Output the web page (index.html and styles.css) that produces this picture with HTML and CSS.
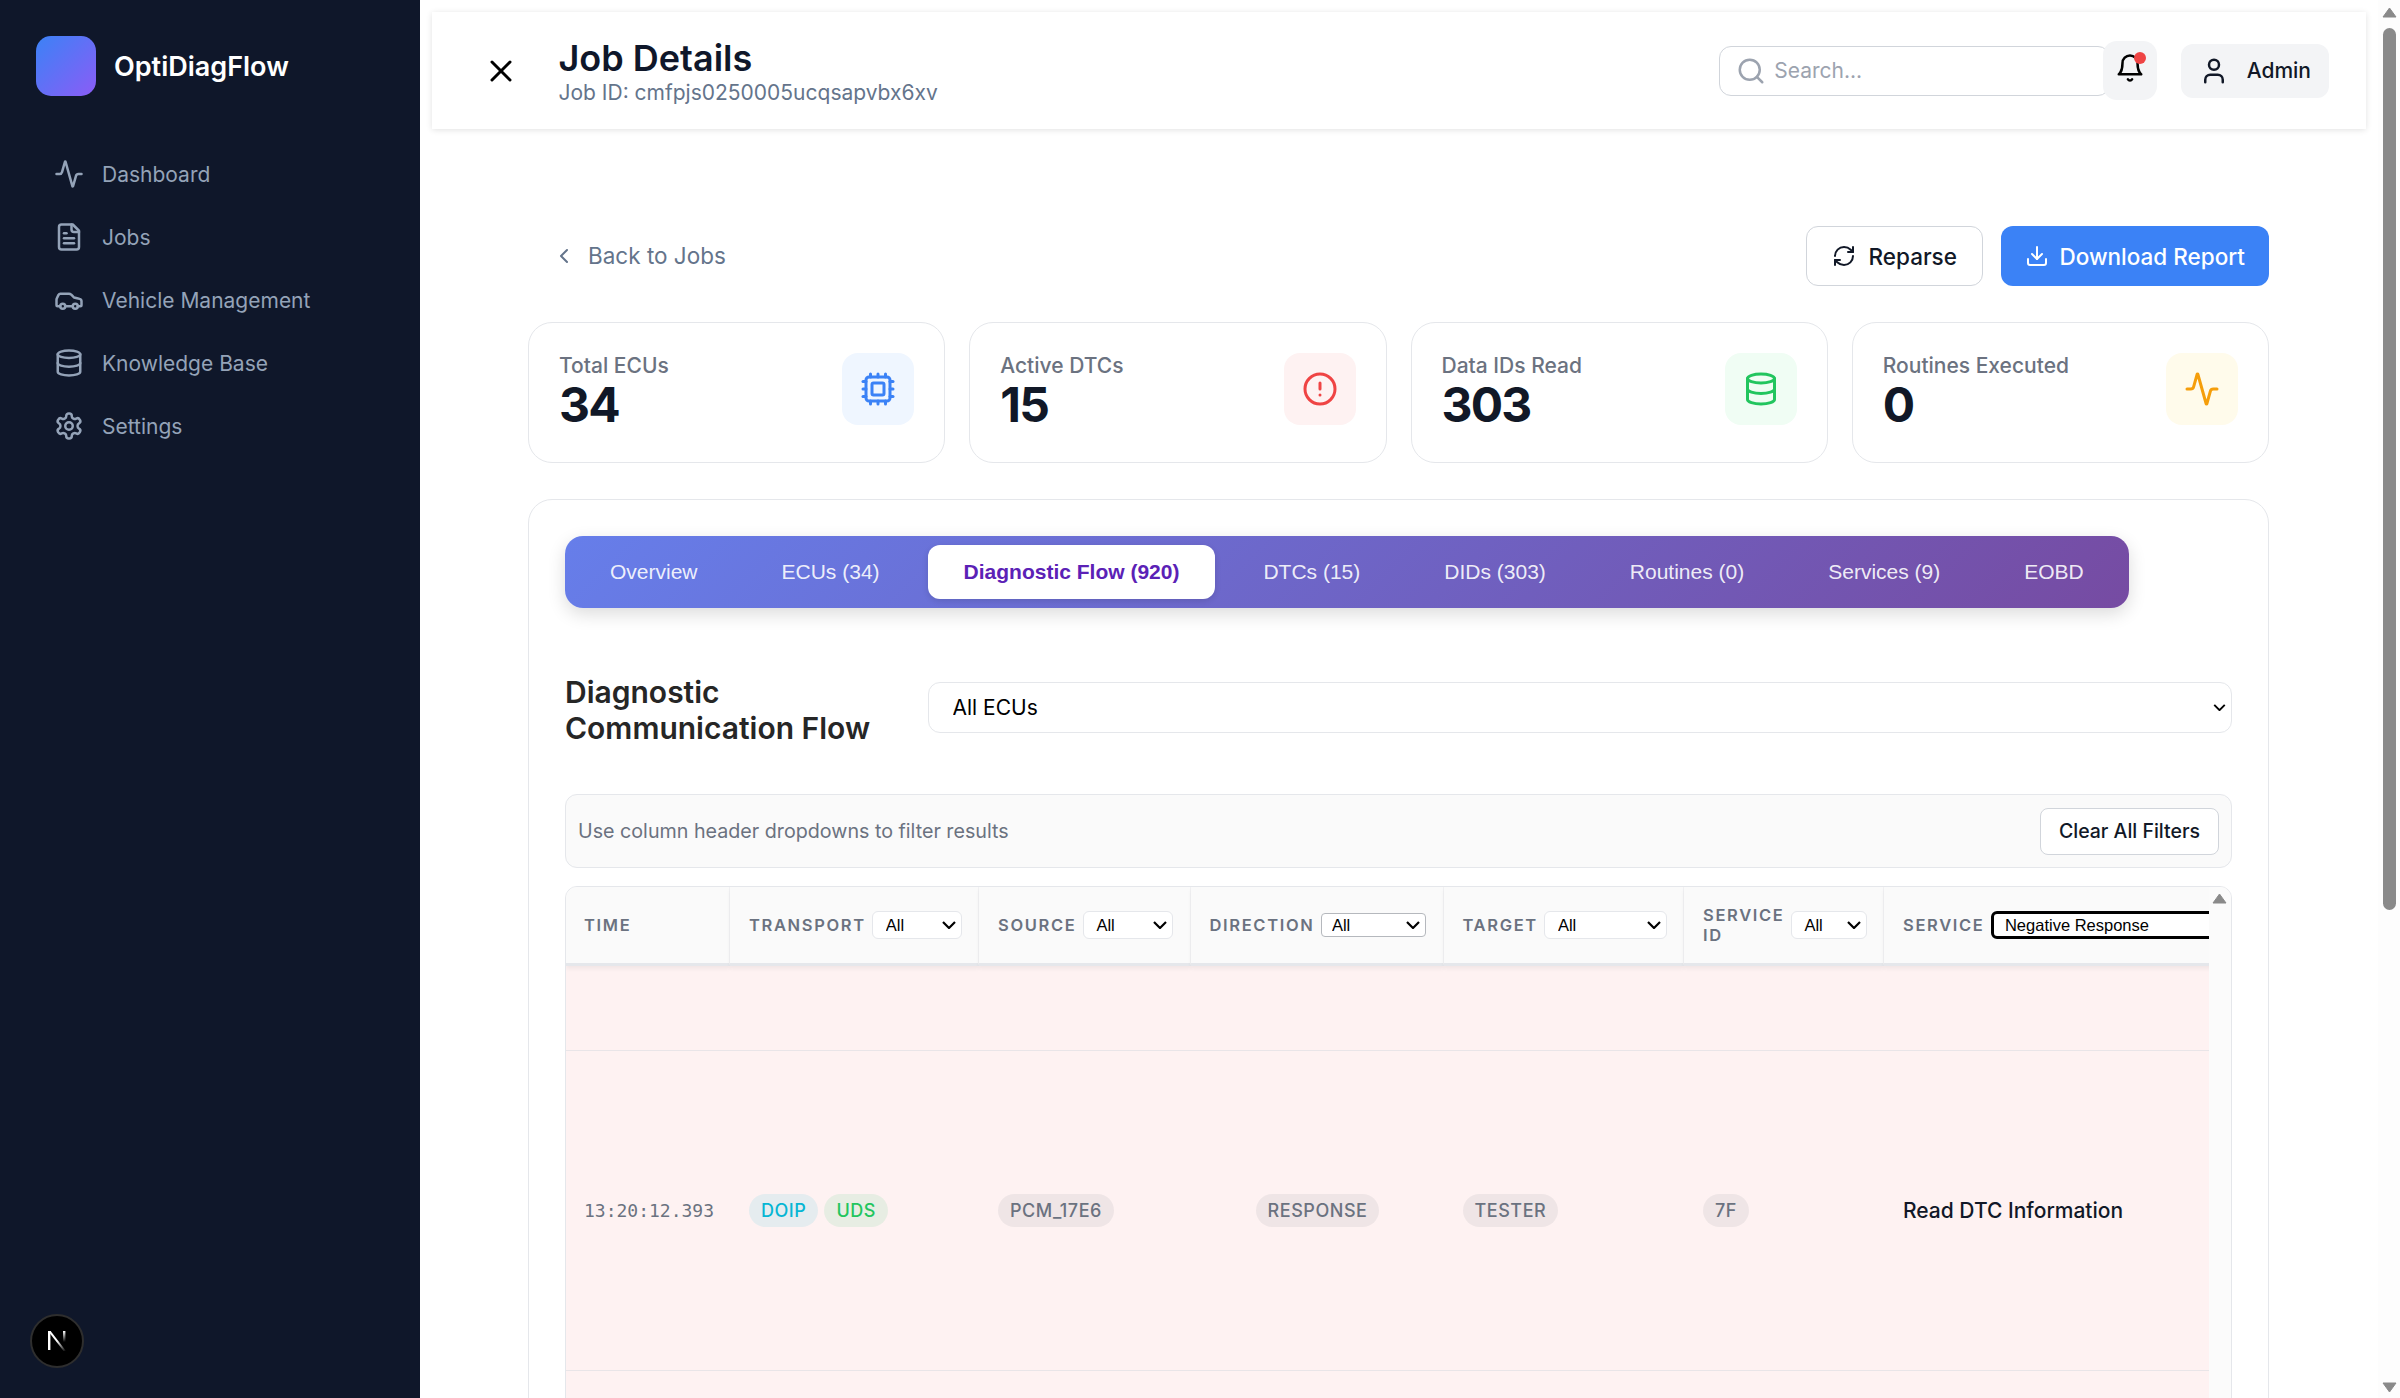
FILE: index.html
```html
<!DOCTYPE html>
<html lang="en">
<head>
<meta charset="utf-8">
<title>OptiDiagFlow - Job Details</title>
<link rel="stylesheet" href="styles.css">
</head>
<body>
<div class="app">
  <aside class="sidebar">
    <div class="brand"><div class="brand-logo"></div><span class="brand-name">OptiDiagFlow</span></div>
    <nav class="nav">
      <a class="nav-item"><svg class="ic30" viewBox="0 0 24 24"><path d="M22 12h-2.48a2 2 0 0 0-1.93 1.46l-2.35 8.36a.25.25 0 0 1-.48 0L9.24 2.18a.25.25 0 0 0-.48 0l-2.35 8.36A2 2 0 0 1 4.49 12H2"/></svg>Dashboard</a>
      <a class="nav-item"><svg class="ic30" viewBox="0 0 24 24"><path d="M15 2H6a2 2 0 0 0-2 2v16a2 2 0 0 0 2 2h12a2 2 0 0 0 2-2V7Z"/><path d="M14 2v4a2 2 0 0 0 2 2h4"/><path d="M10 9H8"/><path d="M16 13H8"/><path d="M16 17H8"/></svg>Jobs</a>
      <a class="nav-item"><svg class="ic30" viewBox="0 0 24 24"><path d="M19 17h2c.6 0 1-.4 1-1v-3c0-.9-.7-1.7-1.5-1.9C18.7 10.6 16 10 16 10s-1.3-1.4-2.2-2.3c-.5-.4-1.1-.7-1.8-.7H5c-.6 0-1.1.4-1.4.9l-1.4 2.9A3.7 3.7 0 0 0 2 12v4c0 .6.4 1 1 1h2"/><circle cx="7" cy="17" r="2"/><path d="M9 17h6"/><circle cx="17" cy="17" r="2"/></svg>Vehicle Management</a>
      <a class="nav-item"><svg class="ic30" viewBox="0 0 24 24"><ellipse cx="12" cy="5" rx="9" ry="3"/><path d="M3 5V19A9 3 0 0 0 21 19V5"/><path d="M3 12A9 3 0 0 0 21 12"/></svg>Knowledge Base</a>
      <a class="nav-item"><svg class="ic30" viewBox="0 0 24 24"><path d="M12.22 2h-.44a2 2 0 0 0-2 2v.18a2 2 0 0 1-1 1.73l-.43.25a2 2 0 0 1-2 0l-.15-.08a2 2 0 0 0-2.73.73l-.22.38a2 2 0 0 0 .73 2.73l.15.1a2 2 0 0 1 1 1.72v.51a2 2 0 0 1-1 1.74l-.15.09a2 2 0 0 0-.73 2.73l.22.38a2 2 0 0 0 2.73.73l.15-.08a2 2 0 0 1 2 0l.43.25a2 2 0 0 1 1 1.73V20a2 2 0 0 0 2 2h.44a2 2 0 0 0 2-2v-.18a2 2 0 0 1 1-1.73l.43-.25a2 2 0 0 1 2 0l.15.08a2 2 0 0 0 2.73-.73l.22-.39a2 2 0 0 0-.73-2.73l-.15-.08a2 2 0 0 1-1-1.74v-.5a2 2 0 0 1 1-1.74l.15-.09a2 2 0 0 0 .73-2.73l-.22-.38a2 2 0 0 0-2.73-.73l-.15.08a2 2 0 0 1-2 0l-.43-.25a2 2 0 0 1-1-1.73V4a2 2 0 0 0-2-2z"/><circle cx="12" cy="12" r="3"/></svg>Settings</a>
    </nav>
    <svg class="next-badge" viewBox="0 0 54 54">
      <defs>
        <linearGradient id="nd" x1="0" y1="0" x2="1" y2="1"><stop offset="0.5" stop-color="#fff"/><stop offset="1" stop-color="#fff" stop-opacity="0"/></linearGradient>
        <linearGradient id="nr" x1="0" y1="0" x2="0" y2="1"><stop offset="0" stop-color="#fff"/><stop offset="1" stop-color="#fff" stop-opacity="0"/></linearGradient>
      </defs>
      <circle cx="27" cy="27" r="26" fill="#000" stroke="#2e2e2e" stroke-width="2"/>
      <rect x="18" y="17" width="2.4" height="19" fill="#fff"/>
      <polygon points="18,17 20.6,17 36,37 33.6,37" fill="url(#nd)"/>
      <rect x="33" y="17" width="2.4" height="11" fill="url(#nr)"/>
    </svg>
  </aside>

  <main class="main">
    <header class="topbar">
      <svg class="ic36 close" viewBox="0 0 24 24"><path d="M18 6 6 18"/><path d="m6 6 12 12"/></svg>
      <div class="title-block">
        <h1 class="page-title">Job Details</h1>
        <div class="page-sub">Job ID: cmfpjs0250005ucqsapvbx6xv</div>
      </div>
      <div class="top-actions">
        <label class="search"><svg class="ic30" viewBox="0 0 24 24"><circle cx="11" cy="11" r="8"/><path d="m21 21-4.3-4.3"/></svg><input class="search-input" type="text" placeholder="Search..."></label>
        <button class="bell"><svg class="ic30" viewBox="0 0 24 24"><path d="M6 8a6 6 0 0 1 12 0c0 7 3 9 3 9H3s3-2 3-9"/><path d="M10.3 21a1.94 1.94 0 0 0 3.4 0"/></svg><span class="bell-dot"></span></button>
        <button class="admin"><svg class="ic30" viewBox="0 0 24 24"><path d="M19 21v-2a4 4 0 0 0-4-4H9a4 4 0 0 0-4 4v2"/><circle cx="12" cy="7" r="4"/></svg>Admin</button>
      </div>
    </header>

    <div class="content">
      <div class="action-row">
        <a class="back"><svg class="ic24" viewBox="0 0 24 24"><path d="m15 18-6-6 6-6"/></svg>Back to Jobs</a>
        <div class="action-btns">
          <button class="btn btn-outline"><svg class="ic24" viewBox="0 0 24 24"><path d="M3 12a9 9 0 0 1 9-9 9.75 9.75 0 0 1 6.74 2.74L21 8"/><path d="M21 3v5h-5"/><path d="M21 12a9 9 0 0 1-9 9 9.75 9.75 0 0 1-6.74-2.74L3 16"/><path d="M8 16H3v5"/></svg>Reparse</button>
          <button class="btn btn-primary"><svg class="ic24" viewBox="0 0 24 24"><path d="M21 15v4a2 2 0 0 1-2 2H5a2 2 0 0 1-2-2v-4"/><polyline points="7 10 12 15 17 10"/><line x1="12" x2="12" y1="15" y2="3"/></svg>Download Report</button>
        </div>
      </div>

      <section class="stats">
        <div class="stat"><div class="stat-text"><div class="stat-label">Total ECUs</div><div class="stat-value">34</div></div><div class="stat-icon tint-blue"><svg class="ic36" viewBox="0 0 24 24"><path d="M12 20v2"/><path d="M12 2v2"/><path d="M17 20v2"/><path d="M17 2v2"/><path d="M2 12h2"/><path d="M2 17h2"/><path d="M2 7h2"/><path d="M20 12h2"/><path d="M20 17h2"/><path d="M20 7h2"/><path d="M7 20v2"/><path d="M7 2v2"/><rect x="4" y="4" width="16" height="16" rx="2"/><rect x="8" y="8" width="8" height="8" rx="1"/></svg></div></div>
        <div class="stat"><div class="stat-text"><div class="stat-label">Active DTCs</div><div class="stat-value">15</div></div><div class="stat-icon tint-red"><svg class="ic36" viewBox="0 0 24 24"><circle cx="12" cy="12" r="10"/><line x1="12" x2="12" y1="8" y2="12"/><line x1="12" x2="12.01" y1="16" y2="16"/></svg></div></div>
        <div class="stat"><div class="stat-text"><div class="stat-label">Data IDs Read</div><div class="stat-value">303</div></div><div class="stat-icon tint-green"><svg class="ic36" viewBox="0 0 24 24"><ellipse cx="12" cy="5" rx="9" ry="3"/><path d="M3 5V19A9 3 0 0 0 21 19V5"/><path d="M3 12A9 3 0 0 0 21 12"/></svg></div></div>
        <div class="stat"><div class="stat-text"><div class="stat-label">Routines Executed</div><div class="stat-value">0</div></div><div class="stat-icon tint-amber"><svg class="ic36" viewBox="0 0 24 24"><path d="M22 12h-2.48a2 2 0 0 0-1.93 1.46l-2.35 8.36a.25.25 0 0 1-.48 0L9.24 2.18a.25.25 0 0 0-.48 0l-2.35 8.36A2 2 0 0 1 4.49 12H2"/></svg></div></div>
      </section>

      <section class="panel">
        <div class="tabs">
          <span class="tab">Overview</span>
          <span class="tab">ECUs (34)</span>
          <span class="tab tab-active">Diagnostic Flow (920)</span>
          <span class="tab">DTCs (15)</span>
          <span class="tab">DIDs (303)</span>
          <span class="tab">Routines (0)</span>
          <span class="tab">Services (9)</span>
          <span class="tab">EOBD</span>
        </div>

        <div class="flow-head">
          <h2 class="flow-title">Diagnostic Communication Flow</h2>
          <select class="ecu-select"><option>All ECUs</option></select>
        </div>

        <div class="filter-bar">
          <span class="filter-hint">Use column header dropdowns to filter results</span>
          <button class="clear-btn">Clear All Filters</button>
        </div>

        <div class="table-wrap">
          <div class="table-scroll">
            <table class="flow-table">
              <colgroup><col class="c-time"><col class="c-transport"><col class="c-source"><col class="c-direction"><col class="c-target"><col class="c-sid"><col class="c-service"></colgroup>
              <thead>
                <tr>
                  <th><div class="thc">Time</div></th>
                  <th><div class="thc"><span>Transport</span><select class="fsel"><option>All</option></select></div></th>
                  <th><div class="thc"><span>Source</span><select class="fsel"><option>All</option></select></div></th>
                  <th><div class="thc"><span>Direction</span><select class="fsel fsel-plain"><option>All</option></select></div></th>
                  <th><div class="thc"><span>Target</span><select class="fsel"><option>All</option></select></div></th>
                  <th><div class="thc"><span class="narrow">Service ID</span><select class="fsel"><option>All</option></select></div></th>
                  <th><div class="thc"><span>Service</span><select class="fsel fsel-focus"><option>Negative Response</option></select></div></th>
                </tr>
              </thead>
              <tbody>
                <tr class="row-a"><td></td><td></td><td></td><td></td><td></td><td></td><td></td></tr>
                <tr class="row-b">
                  <td class="time">13:20:12.393</td>
                  <td><span class="badge b-cyan">DOIP</span><span class="badge b-green">UDS</span></td>
                  <td><span class="badge b-gray">PCM_17E6</span></td>
                  <td class="center"><span class="badge b-gray">RESPONSE</span></td>
                  <td><span class="badge b-gray">TESTER</span></td>
                  <td><span class="badge b-gray">7F</span></td>
                  <td class="svc">Read DTC Information</td>
                </tr>
                <tr class="row-c"><td></td><td></td><td></td><td></td><td></td><td></td><td></td></tr>
              </tbody>
            </table>
          </div>
          <div class="table-gutter"><svg class="arrow" viewBox="0 0 15 11"><path d="M7.5 1 14 10H1z"/></svg></div>
        </div>
      </section>
    </div>
  </main>

  <div class="page-scrollbar">
    <svg class="arrow" viewBox="0 0 15 11"><path d="M7.5 1 14 10H1z"/></svg>
    <div class="thumb"></div>
    <svg class="arrow arrow-down" viewBox="0 0 15 11"><path d="M7.5 10 14 1H1z"/></svg>
  </div>
</div>
</body>
</html>
```
FILE: styles.css
```css
* { box-sizing: border-box; }
html, body { margin: 0; height: 100%; overflow: hidden; background: #fff; }
body { font-family: Inter, "Liberation Sans", sans-serif; font-size: 21px; color: #111827; }
h1, h2 { margin: 0; }
button { font-family: inherit; cursor: pointer; }
svg { flex: none; display: block; }

.ic24, .ic30, .ic36 { fill: none; stroke: currentColor; stroke-width: 2; stroke-linecap: round; stroke-linejoin: round; }
.ic24 { width: 24px; height: 24px; }
.ic30 { width: 30px; height: 30px; }
.ic36 { width: 36px; height: 36px; }

.app { display: flex; height: 100vh; overflow: hidden; }

/* sidebar */
.sidebar { position: relative; flex: 0 0 420px; background: #0f172a; padding: 36px 36px 0; }
.brand { display: flex; align-items: center; gap: 18px; height: 60px; }
.brand-logo { width: 60px; height: 60px; border-radius: 15px; background: linear-gradient(135deg, #3b82f6, #8b5cf6); }
.brand-name { font-size: 27px; font-weight: 600; color: #fff; }
.nav { display: flex; flex-direction: column; gap: 6px; margin-top: 49.5px; }
.nav-item { display: flex; align-items: center; gap: 18px; height: 57px; padding: 0 18px; color: #94a3b8; font-size: 21px; }
.next-badge { position: absolute; left: 30px; bottom: 30px; width: 54px; height: 54px; }

/* main */
.main { flex: 1; min-width: 0; }
.topbar { display: flex; align-items: center; height: 117px; margin: 12px 12px 0; padding: 0 37px 0 51px; background: #fff; box-shadow: 0 1px 6px rgba(0,0,0,.12); }
.close { color: #000; margin-top: 1px; }
.title-block { margin: 5px 0 0 39.5px; }
.page-title { font-size: 36px; line-height: 40px; font-weight: 600; color: #0f172a; }
.page-sub { font-size: 21px; line-height: 30px; color: #64748b; }
.top-actions { display: flex; align-items: center; margin-left: auto; }
.search { display: flex; align-items: center; gap: 8px; width: 391px; height: 50px; padding: 0 16.5px; border: 1.5px solid #d1d5db; border-radius: 12px; color: #9ca3af; background: #fff; }
.search-input { flex: 1; min-width: 0; border: 0; outline: 0; padding: 0; font: 21px Inter, sans-serif; background: transparent; }
.search-input::placeholder { color: #9ca3af; opacity: 1; }
.bell { position: relative; display: flex; align-items: center; justify-content: center; width: 54px; height: 59px; margin-left: -7px; padding: 0 0 5px; border: 0; border-radius: 14px; background: #f3f4f6; color: #000; }
.bell-dot { position: absolute; top: 11px; right: 11px; width: 12px; height: 12px; border-radius: 50%; background: #ef4444; }
.admin { display: flex; align-items: center; gap: 18px; height: 54px; margin-left: 24px; padding: 0 18px; border: 0; border-radius: 12px; background: #f3f4f6; color: #111827; font-size: 21px; font-weight: 500; }

.content { padding: 97px 109px 0 108px; }
.action-row { display: flex; justify-content: space-between; align-items: center; height: 60px; }
.back { display: flex; align-items: center; gap: 12px; padding: 0 0 1px 24px; color: #64748b; font-size: 22.5px; }
.action-btns { display: flex; gap: 18px; }
.btn { display: flex; align-items: center; height: 60px; border-radius: 12px; font-size: 22.5px; font-weight: 500; }
.btn-outline { gap: 13px; padding: 0 25px; background: #fff; border: 1.5px solid #d1d5db; color: #111827; }
.btn-primary { gap: 10.5px; padding: 0 24px; background: #3b82f6; border: 0; color: #fff; }

.stats { display: grid; grid-template-columns: repeat(4, 1fr); gap: 24px; margin-top: 36px; }
.stat { display: flex; justify-content: space-between; align-items: flex-start; padding: 30px; border: 1.5px solid #e5e7eb; border-radius: 24px; background: #fff; }
.stat-label { font-size: 21px; line-height: 25px; font-weight: 500; color: #6b7280; }
.stat-value { font-size: 48px; line-height: 54px; font-weight: 700; letter-spacing: -1.8px; color: #111827; }
.stat-icon { display: flex; align-items: center; justify-content: center; width: 72px; height: 72px; border-radius: 16px; }
.tint-blue { background: #eff6ff; color: #3b82f6; }
.tint-red { background: #fef2f2; color: #ef4444; }
.tint-green { background: #f0fdf4; color: #22c55e; }
.tint-amber { background: #fffbeb; color: #f59e0b; }

.panel { margin-top: 36px; padding: 36px; border: 1.5px solid #e5e7eb; border-radius: 24px; background: #fff; }
.tabs { display: inline-flex; gap: 12px; padding: 9px; border-radius: 18px; background: linear-gradient(135deg, #667eea, #764ba2); box-shadow: 0 6px 18px rgba(0,0,0,.14); }
.tab { display: flex; align-items: center; height: 54px; padding: 0 36px; border-radius: 12px; color: rgba(255,255,255,.9); font-family: "Liberation Sans", Arial, sans-serif; font-size: 21px; white-space: nowrap; }
.tab-active { background: #fff; color: #5b21b6; font-weight: 700; box-shadow: 0 2px 6px rgba(0,0,0,.12); }

.flow-head { display: flex; align-items: flex-start; gap: 24px; margin-top: 65.5px; }
.flow-title { flex: 0 0 339px; font-size: 30px; line-height: 36px; font-weight: 600; color: #262626; }
.ecu-select, .fsel { appearance: none; background-color: #fff; background-repeat: no-repeat; background-image: url("data:image/svg+xml,%3Csvg xmlns='http://www.w3.org/2000/svg' viewBox='0 0 14 8'%3E%3Cpath d='M1 1l6 6 6-6' fill='none' stroke='%23000' stroke-width='2.2'/%3E%3C/svg%3E"); }
.ecu-select { flex: 1; height: 51px; margin-top: 8.5px; padding: 0 30px 0 23.5px; border: 1.5px solid #e5e7eb; border-radius: 12px; background-size: 13px 7px; background-position: right 5px center; font: 21px Inter, sans-serif; color: #000; }

.filter-bar { display: flex; justify-content: space-between; align-items: center; height: 74px; margin-top: 48.5px; padding: 0 12px; border: 1.5px solid #e5e7eb; border-radius: 12px; background: #fafafa; }
.filter-hint { font-size: 19.7px; color: #6b7280; }
.clear-btn { height: 47px; padding: 0 18px; border: 1.5px solid #d1d5db; border-radius: 8px; background: #fff; font-size: 19.5px; font-weight: 500; color: #111827; }

.table-wrap { display: flex; margin-top: 18px; border: 1.5px solid #e5e7eb; border-radius: 12px; overflow: hidden; background: #fbfbfb; }
.table-scroll { flex: 1; min-width: 0; overflow: hidden; }
.table-gutter { flex: 0 0 22px; padding: 6px 3px 0; background: #fbfbfb; }
.arrow { width: 15px; height: 11px; fill: #8a8a8a; stroke: #8a8a8a; stroke-width: 1; stroke-linejoin: round; }

.flow-table { width: 1770px; table-layout: fixed; border-collapse: separate; border-spacing: 0; }
.c-time { width: 164px; }
.c-transport { width: 249px; }
.c-source { width: 211.5px; }
.c-direction { width: 253px; }
.c-target { width: 240.5px; }
.c-sid { width: 200px; }
.c-service { width: 452px; }
.flow-table th { position: relative; height: 79px; padding: 0 16.5px 0 19px; background: #fafafa; border-right: 1.5px solid #f1f1f3; border-bottom: 3px solid #e5e7eb; box-shadow: 0 3px 4px rgba(0,0,0,.05); text-align: left; }
.flow-table th:first-child { padding-left: 18px; }
.thc { display: flex; align-items: center; gap: 6.5px; font-size: 16.5px; line-height: 20px; font-weight: 600; letter-spacing: 1.65px; text-transform: uppercase; color: #6b7280; }
.narrow { width: min-content; }
.fsel { flex: 1; min-width: 0; height: 28px; padding: 0 20px 0 12.5px; border: 1.5px solid #e5e7eb; border-radius: 6px; background-size: 14px 8px; background-position: right 5px center; font: 400 16.5px "Liberation Sans", Arial, sans-serif; letter-spacing: 0; color: #000; }
.fsel-plain { height: 24px; padding-left: 10px; border-color: #b5b8bd; border-radius: 4px; }
.fsel-focus { flex: none; width: 400px; padding-left: 11px; border: 3px solid #000; }

.flow-table td { padding: 0 18px 0 19px; background: #fef2f2; border-bottom: 1.5px solid #e9e5e8; vertical-align: middle; }
.row-a td { height: 85px; }
.row-b td { height: 320px; }
.row-c td { height: 320px; }
.flow-table .time { padding-left: 18px; font-family: "DejaVu Sans Mono", monospace; font-size: 18px; color: #6b7280; }
.center { text-align: center; }
.badge { display: inline-block; height: 33px; line-height: 33px; padding: 0 12px; border-radius: 17px; font-size: 18px; font-weight: 500; letter-spacing: .54px; }
.badge + .badge { margin-left: 6px; }
.b-cyan { background: rgba(6,182,212,.1); color: #06b6d4; }
.b-green { background: rgba(34,197,94,.1); color: #22c55e; }
.b-gray { background: rgba(107,114,128,.1); color: #6b7280; }
.svc { font-size: 21px; font-weight: 500; color: #111827; white-space: nowrap; }

.page-scrollbar { flex: 0 0 22px; display: flex; flex-direction: column; align-items: center; padding: 7px 0 5px; background: #fdfdfd; }
.thumb { width: 13px; height: 882px; margin-top: 10px; border-radius: 7px; background: #8a8a8a; }
.arrow-down { margin-top: auto; }
```
